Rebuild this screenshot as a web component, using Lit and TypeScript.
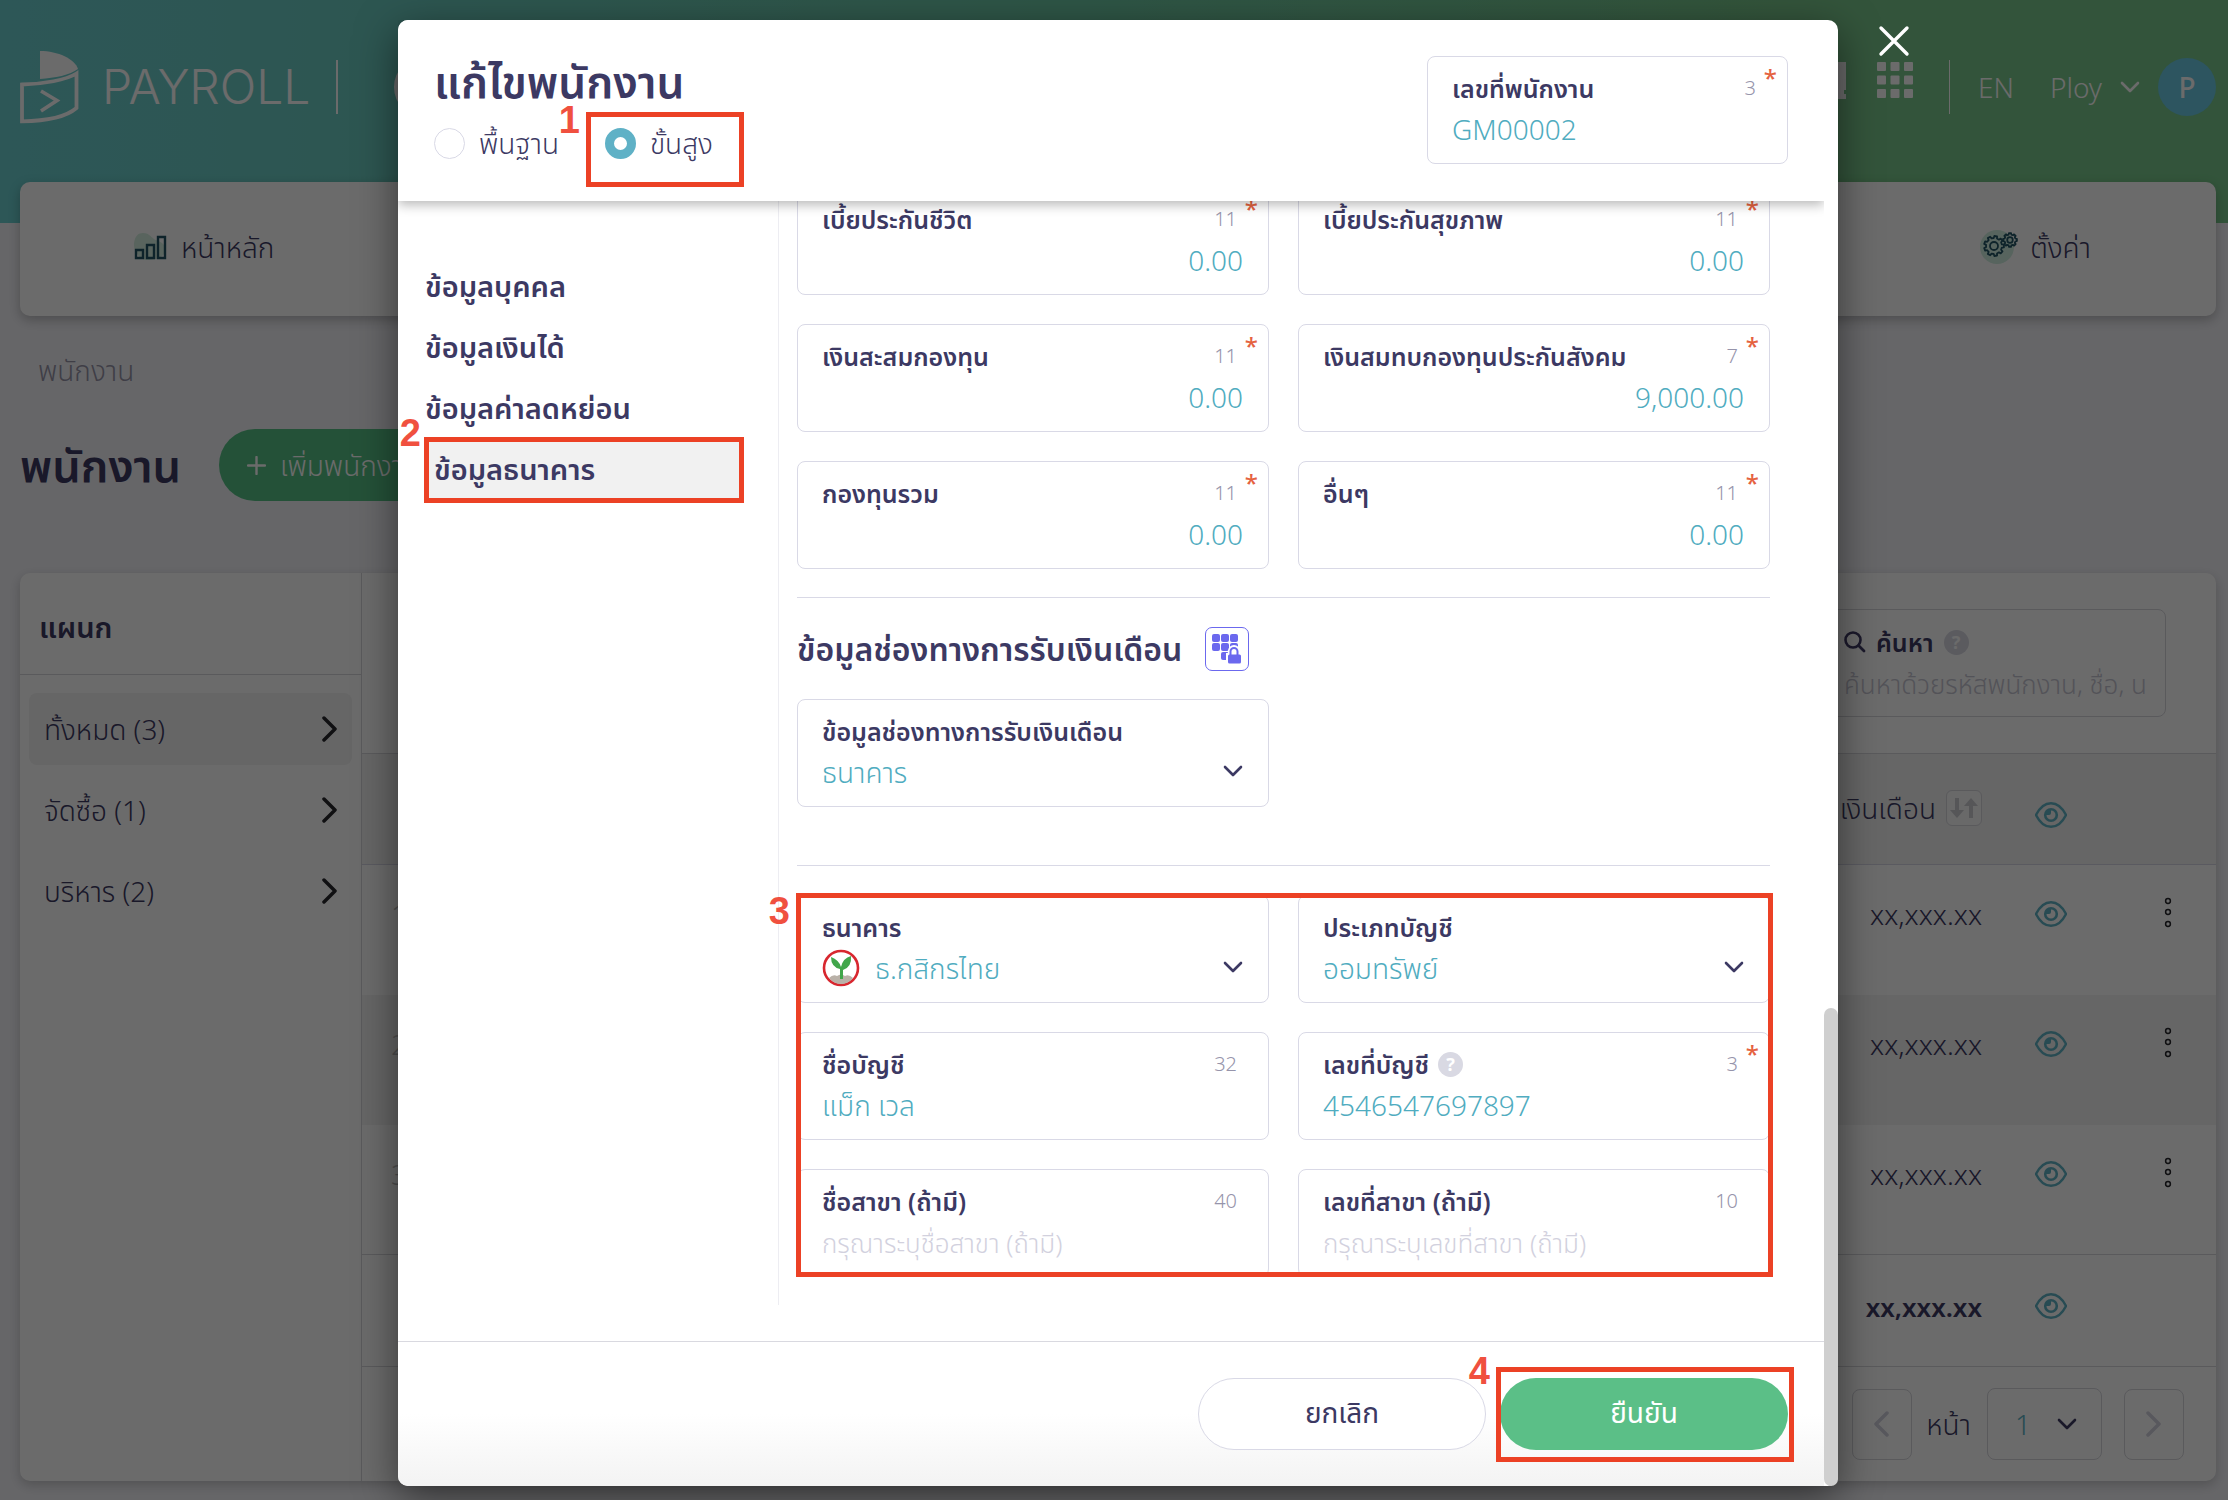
import { LitElement, html, css, svg, nothing } from "lit";
import { customElement, state } from "lit/decorators.js";
import { classMap } from "lit/directives/class-map.js";

interface Field {
  id: string;
  label: string;
  value?: string;
  placeholder?: string;
  count?: number;
  required?: boolean;
  numeric?: boolean;
  help?: boolean;
  select?: boolean;
  bank?: boolean;
}

const deductions: Field[] = [
  { id: "life", label: "เบี้ยประกันชีวิต", value: "0.00", count: 11, required: true, numeric: true },
  { id: "health", label: "เบี้ยประกันสุขภาพ", value: "0.00", count: 11, required: true, numeric: true },
  { id: "fund", label: "เงินสะสมกองทุน", value: "0.00", count: 11, required: true, numeric: true },
  { id: "social", label: "เงินสมทบกองทุนประกันสังคม", value: "9,000.00", count: 7, required: true, numeric: true },
  { id: "mutual", label: "กองทุนรวม", value: "0.00", count: 11, required: true, numeric: true },
  { id: "other", label: "อื่นๆ", value: "0.00", count: 11, required: true, numeric: true },
];

const channel: Field = { id: "channel", label: "ข้อมูลช่องทางการรับเงินเดือน", value: "ธนาคาร", select: true };

const bankFields: Field[] = [
  { id: "bank", label: "ธนาคาร", value: "ธ.กสิกรไทย", select: true, bank: true },
  { id: "type", label: "ประเภทบัญชี", value: "ออมทรัพย์", select: true },
  { id: "accname", label: "ชื่อบัญชี", value: "แม็ก เวล", count: 32 },
  { id: "accno", label: "เลขที่บัญชี", value: "4546547697897", count: 3, required: true, help: true },
  { id: "branch", label: "ชื่อสาขา (ถ้ามี)", placeholder: "กรุณาระบุชื่อสาขา (ถ้ามี)", count: 40 },
  { id: "branchno", label: "เลขที่สาขา (ถ้ามี)", placeholder: "กรุณาระบุเลขที่สาขา (ถ้ามี)", count: 10 },
];

const sections = ["ข้อมูลบุคคล", "ข้อมูลเงินได้", "ข้อมูลค่าลดหย่อน", "ข้อมูลธนาคาร"];
const departments = ["ทั้งหมด (3)", "จัดซื้อ (1)", "บริหาร (2)"];

const gear = (cx: number, cy: number, r: number, teeth: number) => {
  const points: string[] = [];
  for (let i = 0; i < teeth; i++) {
    const a = (i / teeth) * Math.PI * 2;
    const s = (Math.PI * 2) / teeth;
    const parts: [number, number][] = [[-0.3, 0.8], [-0.2, 1], [0.2, 1], [0.3, 0.8]];
    for (const [o, k] of parts) {
      points.push(`${(cx + Math.cos(a + o * s) * r * k).toFixed(2)},${(cy + Math.sin(a + o * s) * r * k).toFixed(2)}`);
    }
  }
  return svg`<polygon points=${points.join(" ")} fill="none" stroke="#235565" stroke-width="1.800" stroke-linejoin="round"/>
    <circle cx=${cx} cy=${cy} r=${r * 0.4} fill="none" stroke="#235565" stroke-width="1.800"/>`;
};

const chevronDown = html`<svg class="chev" width="20" height="12" viewBox="0 0 20 12" aria-hidden="true">
  <path d="M2 2l8 8 8-8" fill="none" stroke="currentColor" stroke-width="2.600" stroke-linecap="round" stroke-linejoin="round"/></svg>`;
const chevronRight = html`<svg width="16" height="26" viewBox="0 0 16 26" aria-hidden="true">
  <path d="M2 2l11 11L2 24" fill="none" stroke="currentColor" stroke-width="3.500" stroke-linecap="round" stroke-linejoin="round"/></svg>`;
const chevronLeft = html`<svg width="16" height="26" viewBox="0 0 16 26" aria-hidden="true">
  <path d="M13 2L2 13l11 11" fill="none" stroke="currentColor" stroke-width="3.500" stroke-linecap="round" stroke-linejoin="round"/></svg>`;
const eye = html`<svg width="32" height="26" viewBox="0 0 32 26" aria-hidden="true">
  <path d="M1 13C5 5 10 1.200 16 1.200S27 5 31 13C27 21 22 24.800 16 24.800S5 21 1 13z" fill="none" stroke="#5fb4c5" stroke-width="2.400" stroke-linejoin="round"/>
  <circle cx="16" cy="13" r="5.800" fill="none" stroke="#5fb4c5" stroke-width="2.600"/>
  <path d="M16 7v4a2 2 0 0 1-2 2h-4a6 6 0 0 1 6-6z" fill="#5fb4c5"/></svg>`;
const kebab = html`<svg width="8" height="32" viewBox="0 0 8 32" aria-hidden="true">
  ${[4, 15, 27].map((y) => svg`<circle cx="4" cy=${y} r="2.400" fill="none" stroke="#26262b" stroke-width="1.500"/>`)}</svg>`;

@customElement("app-root")
export class AppRoot extends LitElement {
  @state() private section = 3;
  @state() private mode = "advanced";

  static styles = css`
    :host {
      display: block;
      min-height: 100vh;
      position: relative;
      overflow: hidden;
      background: #f3f3f8;
      color: #3c3963;
      font-family: "Noto Sans", "Noto Sans Thai", "Liberation Sans", sans-serif;
      font-size: 28px;
      font-weight: 300;
      line-height: 36px;
    }
    * { box-sizing: border-box; }
    button, input, select { font: inherit; color: inherit; margin: 0; padding: 0; border: 0; background: none; outline: none; border-radius: 0; }
    button { cursor: pointer; }
    select { appearance: none; cursor: pointer; }
    svg { display: block; flex: none; }
    a { color: inherit; text-decoration: none; }
    h1, h2, p, ul { margin: 0; padding: 0; list-style: none; }

    .banner { height: 223px; margin-bottom: -41px; background: linear-gradient(90deg, #6bcfd0, #6fcaa5 50%, #79c98c 80%); color: #fff; padding: 51px 12px 0 20px; }
    .banner-row { display: flex; align-items: center; height: 72px; }
    .brand { display: flex; align-items: center; gap: 22px; font-family: Inter, "Liberation Sans", sans-serif; font-size: 48px; font-weight: 300; line-height: 48px; }
    .rule { width: 2px; height: 54px; background: #fff; }
    .brand-rule { margin-left: 26px; }
    .ring { width: 60px; height: 60px; border: 4px solid #fff; border-radius: 50%; margin-left: 56px; }
    .tools { margin-left: auto; display: flex; align-items: center; }
    .tools .apps { margin: 0 36px 14px 31px; }
    .tools .screen { margin-bottom: 14px; }
    .tools .thin { width: 1px; }
    .lang { margin-left: 28px; }
    .user { display: flex; align-items: center; gap: 18px; margin-left: 36px; }
    .avatar { width: 58px; height: 58px; border-radius: 50%; background: #6bcae4; display: grid; place-items: center; font-weight: 500; }

    .menu { margin: 0 12px 0 20px; height: 134px; background: #fff; border-radius: 10px; box-shadow: 0 4px 12px rgba(0, 0, 0, .25); display: flex; justify-content: space-between; padding: 0 125px 0 113px; position: relative; }
    .menu a { display: flex; align-items: center; gap: 12px; height: 130px; }
    .crumb { padding: 36px 38px 0; color: #9694a8; }
    .title-row { display: flex; align-items: center; gap: 38px; padding: 41px 20px 72px; }
    .title-row h1 { font-size: 45px; line-height: 60px; font-weight: 600; }
    .add { height: 72px; padding: 0 28px; border-radius: 36px; background: #56c185; color: #fff; display: flex; align-items: center; gap: 14px; }

    .panel { margin: 0 12px 19px 20px; height: 908px; background: #fff; border-radius: 10px; box-shadow: 0 4px 12px rgba(0, 0, 0, .2); display: flex; overflow: hidden; }
    .dept { width: 342px; border-right: 1px solid #d6d6dc; flex: none; }
    .dept h2 { height: 102px; border-bottom: 1px solid #d6d6dc; padding: 36px 19px; font-size: 29px; font-weight: 600; }
    .dept ul { padding: 18px 9px; display: grid; gap: 9px; }
    .dept button { width: 100%; height: 72px; border-radius: 8px; display: flex; align-items: center; justify-content: space-between; padding: 0 14px 0 15px; }
    .dept button svg { color: #26262b; }
    .dept .on { background: #f3f3f3; }
    .list { flex: 1; min-width: 0; display: flex; flex-direction: column; }
    .search-row { display: flex; justify-content: flex-end; padding: 36px 50px 36px 0; }
    .search { width: 348px; height: 108px; border: 1px solid #d6d6dc; border-radius: 8px; padding: 14px 20px 0 25px; display: grid; grid-template-rows: 36px 44px; }
    .search label { display: flex; align-items: center; gap: 10px; font-weight: 600; font-size: 25px; }
    .search input { width: 100%; color: #9f9db0; font-size: 26px; height: 48px; }
    .field input::placeholder { font-size: 26px; color: #d2d1de; opacity: 1; }
    .search input::placeholder { color: #c6c5d2; opacity: 1; }
    .q { width: 25px; height: 25px; border-radius: 50%; background: #d9d9e3; color: #fff; display: inline-grid; place-items: center; font-size: 18px; line-height: 24px; font-weight: 700; }
    table { width: 100%; border-collapse: collapse; table-layout: fixed; border-top: 1px solid #d6d6dc; }
    th, td { padding: 0; font-weight: 300; text-align: right; vertical-align: top; }
    thead tr { height: 111px; background: #f2f2f2; border-bottom: 1px solid #d6d6e4; }
    tbody tr { height: 130px; }
    tbody tr:nth-child(2) { background: #f2f2f2; }
    tbody tr.sum { height: 112px; border-top: 1px solid #d6d6dc; border-bottom: 1px solid #d6d6dc; }
    .no { width: 74px; text-align: left; padding-left: 29px; color: #bbb; }
    .eye-col { width: 138px; }
    .menu-col { width: 96px; }
    td.no, td.amount { padding-top: 31px; }
    .sum td.amount { font-weight: 600; font-size: 26px; padding-top: 34px; }
    .head-cell { display: flex; justify-content: flex-end; align-items: center; gap: 10px; padding-top: 36px; }
    .sort { width: 36px; height: 36px; border: 1px solid #d6d6dc; border-radius: 6px; display: grid; place-items: center; background: #fafafa; }
    .icon-cell { display: grid; place-items: center; padding-top: 36px; width: 100%; }
    thead .icon-cell { padding-top: 48px; }
    .sum .icon-cell { padding-top: 38px; }
    .menu-col .icon-cell { padding-top: 32px; }
    .pager { display: flex; justify-content: flex-end; align-items: center; padding: 21px 32px 0 0; }
    .pager button { width: 60px; height: 71px; border: 1px solid #d6d6dc; border-radius: 8px; display: grid; place-items: center; color: #d2d1de; }
    .pager label { display: flex; align-items: center; gap: 16px; margin: 0 22px 0 14px; }
    .page-select { display: flex; align-items: center; width: 115px; height: 72px; border: 1px solid #d6d6dc; border-radius: 8px; padding: 0 24px 0 27px; }
    .page-select select { flex: 1; min-width: 0; color: #5fb4c5; height: 40px; }

    .overlay { position: absolute; inset: 0; background: rgba(0, 0, 0, .58); display: flex; justify-content: center; padding: 20px 0 14px 8px; }
    .modal { position: relative; width: 1440px; max-width: 100%; background: #fff; border-radius: 10px; box-shadow: 0 12px 40px rgba(0, 0, 0, .5); display: flex; }
    .close { position: absolute; left: 100%; top: 3px; margin-left: 38px; }
    .main { flex: 1; min-width: 0; display: flex; flex-direction: column; }
    .thumb-track { width: 14px; display: flex; flex-direction: column; justify-content: flex-end; }
    .thumb { height: 478px; border-radius: 7px; background: #cfcfcf; }

    .head { height: 181px; flex: none; position: relative; z-index: 1; background: #fff; border-radius: 10px 0 0 0; box-shadow: 0 4px 12px rgba(0, 0, 0, .28); clip-path: inset(0 0 -20px 0); display: flex; justify-content: space-between; padding: 32px 36px 0; }
    .head h1 { font-size: 44px; line-height: 58px; font-weight: 600; }
    .modes { display: flex; gap: 46px; margin-top: 13px; }
    .mode { display: flex; align-items: center; gap: 14px; line-height: 40px; position: relative; }
    .mode input { appearance: none; width: 31px; height: 31px; border: 1px solid #d9d9e6; border-radius: 50%; background: #fff; }
    .mode input:checked { border: 9px solid #5fb1c6; }
    .head .field { width: 361px; margin-top: 4px; }

    .mark { position: absolute; border: 5px solid #ec4125; pointer-events: none; }
    .num { position: absolute; color: #f0503f; font: 700 38px/38px "Liberation Sans", Arial, sans-serif; pointer-events: none; }
    .mode .mark { inset: -11px -31px -24px -19px; }
    .mode .num { right: 100%; bottom: 100%; margin: 0 25px -16px 0; }
    .tabs .mark { inset: -3px -5px -2px -5px; }
    .tabs .num { right: 100%; top: -26px; margin-right: 8px; }
    .bank-grid .mark { inset: -2px -3px 0 -1px; }
    .bank-grid .num { right: 100%; top: -3px; margin-right: 7px; }
    .confirm-wrap .mark { inset: -11px -6px -12px -4px; }
    .confirm-wrap .num { right: 100%; top: -26px; margin-right: 10px; }

    .body { flex: 1; min-height: 0; display: flex; padding-bottom: 36px; overflow: hidden; }
    .tabs { width: 380px; flex: none; padding: 56px 39px 0 27px; }
    .tabs li { position: relative; height: 61px; }
    .tabs button { width: 100%; height: 61px; padding-bottom: 4px; text-align: left; font-size: 29px; font-weight: 600; line-height: 44px; }
    .tabs li.on { margin: 0 0 0 4px; }
    .tabs li.on button { background: #f1f1f1; padding-left: 5px; }
    .form { flex: 1; min-width: 0; border-left: 1px solid #ededf2; padding: 0 54px 28px 18px; display: flex; flex-direction: column; justify-content: flex-end; }
    .grid { display: grid; grid-template-columns: 1fr 1fr; gap: 29px; position: relative; flex: none; }
    .line { height: 1px; flex: none; background: #d9d9e6; margin: 28px 0 29px; }
    .channel-title { display: flex; flex: none; align-items: center; gap: 23px; height: 44px; margin-bottom: 28px; }
    .channel-title h2 { font-size: 32px; line-height: 44px; font-weight: 600; }
    .lock { width: 44px; height: 44px; border: 1px solid #6b68ee; border-radius: 7px; display: grid; place-items: center; }
    .after-channel { margin-top: 58px; }

    .field { position: relative; height: 108px; border: 1px solid #d9d9e6; border-radius: 8px; background: #fff; padding: 13px 25px 0 24px; display: grid; grid-template-rows: 36px 46px; min-width: 0; align-content: start; }
    .top { display: flex; align-items: center; gap: 9px; padding-right: 6px; }
    .top label { font-size: 25px; font-weight: 600; white-space: nowrap; }
    .count { margin-left: auto; color: #9694ab; font-size: 20px; font-weight: 300; }
    .star { position: absolute; right: 10px; top: 5px; color: #e5623f; font-size: 24px; line-height: 32px; font-weight: 500; }
    .control { display: flex; align-items: center; gap: 15px; min-width: 0; }
    .control input, .control select { flex: 1; min-width: 0; width: 0; height: 46px; line-height: 46px; color: #50acc0; }
    .control .chev { margin-bottom: 3px; }
    .numeric input { text-align: right; }

    .foot { flex: none; height: 145px; border-top: 1px solid #d9d9e0; border-radius: 0 0 0 10px; background: linear-gradient(#fff 50%, #f3f3f3); display: flex; justify-content: flex-end; gap: 14px; padding: 36px 36px 0; }
    .foot button { width: 288px; height: 72px; padding-bottom: 4px; border-radius: 36px; font-weight: 400; }
    .cancel { border: 1px solid #d9d9e6; background: #fff; }
    .confirm { background: #5bbf87; color: #fff; }
    .confirm-wrap { position: relative; height: 72px; }
  `;

  private mark(n: number) {
    return html`<span class="mark"></span><span class="num">${n}</span>`;
  }

  private field(f: Field) {
    return html`<div class=${classMap({ field: true, numeric: !!f.numeric })}>
      <div class="top">
        <label for=${f.id}>${f.label}</label>
        ${f.help ? html`<span class="q">?</span>` : nothing}
        ${f.count !== undefined ? html`<span class="count">${f.count}</span>` : nothing}
      </div>
      <div class="control">
        ${f.bank
          ? html`<svg width="38" height="38" viewBox="0 0 38 38" aria-hidden="true">
              <circle cx="19" cy="19" r="17" fill="#fff" stroke="#d8272f" stroke-width="2.600"/>
              <path d="M7 29q4-4 8-2 4-3 8 0 4-2 8 2-5 6-12 6T7 29z" fill="#b9b1a8"/>
              <path d="M18 30V20Q9 18 9 8q8 3 10 10 2-9 10-11 1 11-8 14v9z" fill="#41a64b"/>
            </svg>`
          : nothing}
        ${f.select
          ? html`<select id=${f.id}><option>${f.value}</option></select>${chevronDown}`
          : html`<input id=${f.id} type="text" .value=${f.value ?? ""} placeholder=${f.placeholder ?? ""} />`}
      </div>
      ${f.required ? html`<span class="star">*</span>` : nothing}
    </div>`;
  }

  private page() {
    return html`
      <header class="banner">
        <div class="banner-row">
          <div class="brand">
            <svg width="60" height="73" viewBox="0 0 60 73" aria-hidden="true">
              <path d="M20 0C38 0 55 8 58 18 50 24 35 27 20 28z" fill="#fff"/>
              <path d="M2 33.500C24 33 46 29 56.500 22.500V57C46 66 26 70 2 70.300z" fill="none" stroke="#fff" stroke-width="3.800"/>
              <path d="M21 40l16 9.500L21 60" fill="none" stroke="#fff" stroke-width="3.600"/>
            </svg>
            <span>PAYROLL</span>
          </div>
          <span class="rule brand-rule"></span>
          <span class="ring"></span>
          <div class="tools">
            <svg class="screen" width="36" height="37" viewBox="0 0 36 37" aria-hidden="true">
              <path d="M0 0h36v28H0z M24 28h10v4h2v5H0v-6h24z" fill="#fff"/>
            </svg>
            <svg class="apps" width="36" height="36" viewBox="0 0 36 36" aria-hidden="true">
              ${[0, 13.5, 27].map((y) => [0, 13.5, 27].map((x) => svg`<rect x=${x} y=${y} width="9" height="9" rx="1" fill="#fff"/>`))}
            </svg>
            <span class="rule thin"></span>
            <a class="lang" href="#">EN</a>
            <a class="user" href="#"><span>Ploy</span>${chevronDown}<span class="avatar">P</span></a>
          </div>
        </div>
      </header>
      <nav class="menu">
        <a href="#">
          <svg width="36" height="30" viewBox="0 0 36 30" aria-hidden="true">
            <path d="M10 1c7 0 8 5 13 7s10 4 9 11-10 9-18 9S0 18 1 11 5 1 10 1z" fill="#d5efe0"/>
            <path d="M3 18h7v8H3zM14 13h7v13h-7zM25 5h7v21h-7z" fill="none" stroke="#235565" stroke-width="2.400"/>
          </svg>
          <span>หน้าหลัก</span>
        </a>
        <a href="#">
          <svg width="38" height="34" viewBox="0 0 38 34" aria-hidden="true">
            <circle cx="17" cy="17" r="17" fill="#cfeee0"/>
            ${gear(14, 16, 10, 9)}${gear(30, 10, 7, 8)}
          </svg>
          <span>ตั้งค่า</span>
        </a>
      </nav>
      <p class="crumb">พนักงาน</p>
      <div class="title-row">
        <h1>พนักงาน</h1>
        <button class="add">
          <svg width="19" height="19" viewBox="0 0 19 19" aria-hidden="true"><path d="M9.500 1v17M1 9.500h17" stroke="#fff" stroke-width="2.400" stroke-linecap="round"/></svg>
          <span>เพิ่มพนักงาน</span>
        </button>
      </div>
      <section class="panel">
        <aside class="dept">
          <h2>แผนก</h2>
          <ul>
            ${departments.map((d, i) => html`<li><button class=${classMap({ on: i === 0 })}><span>${d}</span>${chevronRight}</button></li>`)}
          </ul>
        </aside>
        <div class="list">
          <div class="search-row">
            <div class="search">
              <label for="search">
                <svg width="22" height="22" viewBox="0 0 22 22" aria-hidden="true"><circle cx="9" cy="9" r="7.500" fill="none" stroke="#403c66" stroke-width="2.600"/><path d="M14.500 14.500L20 20" stroke="#403c66" stroke-width="2.800" stroke-linecap="round"/></svg>
                ค้นหา <span class="q">?</span>
              </label>
              <input id="search" type="text" placeholder="ค้นหาด้วยรหัสพนักงาน, ชื่อ, น" />
            </div>
          </div>
          <table>
            <thead>
              <tr>
                <th class="no"></th>
                <th><div class="head-cell"><span>เงินเดือน</span>
                  <button class="sort" aria-label="เงินเดือน"><svg width="28" height="22" viewBox="0 0 28 22" aria-hidden="true"><path d="M5 1h4v12h5l-7 8-7-8h5zM19 21h4V9h5l-7-8-7 8h5z" fill="#ccccd2"/></svg></button>
                </div></th>
                <th class="eye-col"><button class="icon-cell">${eye}</button></th>
                <th class="menu-col"></th>
              </tr>
            </thead>
            <tbody>
              ${[1, 2, 3].map((n) => html`<tr>
                <td class="no">${n}</td>
                <td class="amount">xx,xxx.xx</td>
                <td class="eye-col"><button class="icon-cell">${eye}</button></td>
                <td class="menu-col"><button class="icon-cell">${kebab}</button></td>
              </tr>`)}
              <tr class="sum">
                <td class="no"></td>
                <td class="amount">xx,xxx.xx</td>
                <td class="eye-col"><button class="icon-cell">${eye}</button></td>
                <td class="menu-col"></td>
              </tr>
            </tbody>
          </table>
          <div class="pager">
            <button>${chevronLeft}</button>
            <label>หน้า<span class="page-select"><select><option>1</option></select>${chevronDown}</span></label>
            <button>${chevronRight}</button>
          </div>
        </div>
      </section>`;
  }

  private modal() {
    return html`<div class="overlay">
      <div class="modal" role="dialog" aria-modal="true" aria-labelledby="dialog-title">
        <div class="main">
          <div class="head">
            <div>
              <h1 id="dialog-title">แก้ไขพนักงาน</h1>
              <div class="modes">
                <label class="mode"><input type="radio" name="mode" .checked=${this.mode === "basic"} @change=${() => (this.mode = "basic")} />พื้นฐาน</label>
                <label class="mode"><input type="radio" name="mode" .checked=${this.mode === "advanced"} @change=${() => (this.mode = "advanced")} />ขั้นสูง${this.mark(1)}</label>
              </div>
            </div>
            ${this.field({ id: "empno", label: "เลขที่พนักงาน", value: "GM00002", count: 3, required: true })}
          </div>
          <div class="body">
            <ul class="tabs">
              ${sections.map((s, i) => html`<li class=${classMap({ on: i === this.section })}>
                <button @click=${() => (this.section = i)}>${s}</button>
                ${i === 3 ? this.mark(2) : nothing}
              </li>`)}
            </ul>
            <div class="form">
              <div class="grid">${deductions.map((f) => this.field(f))}</div>
              <div class="line"></div>
              <div class="channel-title">
                <h2>ข้อมูลช่องทางการรับเงินเดือน</h2>
                <button class="lock" aria-label="ข้อมูลช่องทางการรับเงินเดือน">
                  <svg width="32" height="32" viewBox="0 0 32 32" aria-hidden="true">
                    ${[[1, 1], [10, 1], [19, 1], [1, 10], [10, 10], [19, 10], [10, 19]].map(([x, y]) => svg`<rect x=${x} y=${y} width="8" height="8" rx="2" fill="#6b68ee"/>`)}
                    <path d="M15 20h2v-2a6 6 0 0 1 12 0v2h2v12H15z" fill="#fff"/>
                    <path d="M19.500 22v-3.500a3.500 3.500 0 0 1 7 0V22" fill="none" stroke="#6b68ee" stroke-width="2"/>
                    <rect x="17" y="21.500" width="13" height="9" rx="1.500" fill="#6b68ee"/>
                  </svg>
                </button>
              </div>
              <div class="grid">${this.field(channel)}</div>
              <div class="line after-channel"></div>
              <div class="grid bank-grid">${bankFields.map((f) => this.field(f))}${this.mark(3)}</div>
            </div>
          </div>
          <div class="foot">
            <button class="cancel">ยกเลิก</button>
            <div class="confirm-wrap"><button class="confirm">ยืนยัน</button>${this.mark(4)}</div>
          </div>
        </div>
        <div class="thumb-track"><div class="thumb"></div></div>
        <button class="close" aria-label="ปิด">
          <svg width="36" height="36" viewBox="0 0 36 36" aria-hidden="true"><path d="M5 5l26 26M31 5L5 31" stroke="#fff" stroke-width="3.400" stroke-linecap="round"/></svg>
        </button>
      </div>
    </div>`;
  }

  render() {
    return html`${this.page()}${this.modal()}`;
  }
}
